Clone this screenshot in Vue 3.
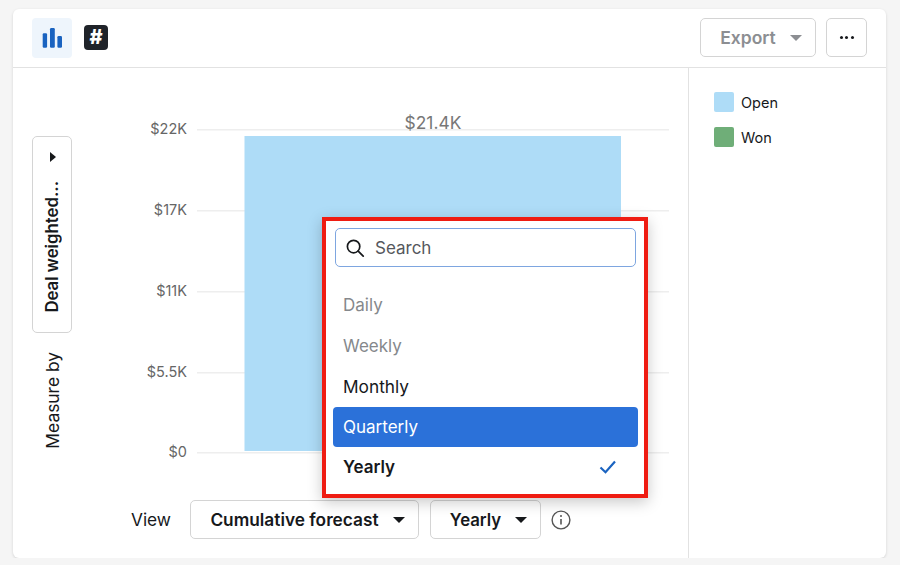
<template>
  <div class="card">
    <!-- top bar -->
    <div class="header">
      <div class="header-left">
        <div class="chart-tab">
          <svg width="20" height="20" viewBox="0 0 20 20">
            <rect x="0.7" y="5.3" width="4.4" height="14.4" rx="1.2" fill="#1a63c0" />
            <rect x="8" y="0" width="4.8" height="19.7" rx="1.2" fill="#1a63c0" />
            <rect x="15.4" y="8" width="4.6" height="11.7" rx="1.2" fill="#1a63c0" />
          </svg>
        </div>
        <div class="hash-tab">#</div>
      </div>
      <div class="header-right">
        <button class="btn export-btn">Export <span class="caret caret-grey" /></button>
        <button class="btn more-btn">
          <span class="dot" /><span class="dot" /><span class="dot" />
        </button>
      </div>
    </div>

    <div class="body">
      <div class="main">
        <div class="chart-row">
          <div class="measure-col">
            <button class="measure-btn">
              <span class="measure-text">Deal weighted...</span>
              <span class="caret-right" />
            </button>
            <span class="measure-label">Measure by</span>
          </div>
          <svg class="chart" width="616" height="432" viewBox="0 0 616 432">
            <g v-for="t in ticks" :key="t.label">
              <line x1="125" :x2="597" :y1="t.y + 0.7" :y2="t.y + 0.7" stroke="#eeeeee" stroke-width="1.5" />
              <text x="115" :y="t.y + 5" text-anchor="end" class="tick">{{ t.label }}</text>
            </g>
            <rect x="172.5" y="68" width="376.5" height="315" fill="#aedcf7" />
            <text x="361" y="61" text-anchor="middle" class="bar-label">$21.4K</text>
          </svg>
        </div>

        <div class="controls">
          <span class="view-label">View</span>
          <button class="btn ctl-btn forecast-btn">Cumulative forecast <span class="caret" /></button>
          <button class="btn ctl-btn yearly-btn">Yearly <span class="caret" /></button>
          <svg class="info" width="20" height="20" viewBox="0 0 20 20" fill="none" stroke="#555" stroke-width="1.4">
            <circle cx="10" cy="10" r="8.9" />
            <path d="M10 9v5.5" stroke-width="1.6" />
            <circle cx="10" cy="6" r="1" fill="#555" stroke="none" />
          </svg>
        </div>

        <!-- period dropdown, highlighted with red frame -->
        <div class="dropdown">
          <div class="search">
            <svg width="20" height="20" viewBox="0 0 20 20" fill="none" stroke="#16181b" stroke-width="1.7">
              <circle cx="8.6" cy="8.6" r="6.2" />
              <path d="M13.2 13.2l5 5" stroke-linecap="round" />
            </svg>
            <span class="search-text">Search</span>
          </div>
          <div class="items">
            <div v-for="o in options" :key="o.label" class="item" :class="o.kind">
              <span>{{ o.label }}</span>
              <svg v-if="o.kind === 'selected'" width="18" height="14" viewBox="0 0 18 14" fill="none" stroke="#1a63c0" stroke-width="2.2">
                <path d="M1.5 7.5l5 4.7L16 1.5" />
              </svg>
            </div>
          </div>
        </div>
      </div>

      <div class="legend">
        <div v-for="l in legend" :key="l.label" class="legend-row">
          <span class="swatch" :style="{ background: l.color }" />
          <span>{{ l.label }}</span>
        </div>
      </div>
    </div>
  </div>
</template>

<script setup>
const ticks = [
  { label: '$22K', y: 61 },
  { label: '$17K', y: 142 },
  { label: '$11K', y: 223 },
  { label: '$5.5K', y: 304 },
  { label: '$0', y: 384 },
]

const options = [
  { label: 'Daily', kind: 'disabled' },
  { label: 'Weekly', kind: 'disabled' },
  { label: 'Monthly', kind: 'plain' },
  { label: 'Quarterly', kind: 'active' },
  { label: 'Yearly', kind: 'selected' },
]

const legend = [
  { label: 'Open', color: '#aedcf7' },
  { label: 'Won', color: '#6fae78' },
]
</script>

<style>
html, body { background: #f5f5f5; }
</style>

<style scoped>
.card {
  box-sizing: border-box;
  width: 873px;
  height: 549px;
  margin: 9px 0 0 13px;
  background: #fff;
  border-radius: 6px;
  box-shadow: 0 1px 3px rgba(0, 0, 0, 0.14);
  display: flex;
  flex-direction: column;
  font-family: Inter, "Liberation Sans", sans-serif;
  color: #16181b;
  overflow: hidden;
}

/* header */
.header {
  flex: none;
  box-sizing: border-box;
  height: 59px;
  border-bottom: 1px solid #e2e2e2;
  display: flex;
  justify-content: space-between;
  padding: 9px 19px 0 19px;
}
.header-left { display: flex; align-items: flex-start; gap: 12px; }
.header-right { display: flex; align-items: flex-start; gap: 10px; }
.chart-tab {
  width: 40px;
  height: 40px;
  background: #eef5fc;
  border-radius: 4px;
  display: flex;
  align-items: center;
  justify-content: center;
}
.hash-tab {
  width: 24px;
  height: 25px;
  margin-top: 7px;
  background: #1f2329;
  border-radius: 4px;
  color: #fff;
  font-size: 20px;
  font-weight: 800;
  line-height: 25px;
  text-align: center;
}
.btn {
  box-sizing: border-box;
  height: 39px;
  background: #fff;
  border: 1px solid #d4d4d4;
  border-radius: 5px;
  font-family: inherit;
  font-size: 17.5px;
  font-weight: 600;
  color: #16181b;
  display: inline-flex;
  align-items: center;
  justify-content: center;
  padding: 0;
}
.export-btn { width: 116px; color: #8c8e92; gap: 14px; padding-left: 6px; }
.more-btn { width: 41px; gap: 2.5px; }
.dot { width: 3px; height: 3px; border-radius: 50%; background: #16181b; }
.caret {
  display: inline-block;
  width: 0;
  height: 0;
  border-left: 6px solid transparent;
  border-right: 6px solid transparent;
  border-top: 6px solid #16181b;
}
.caret-grey { border-top-color: #8c8e92; }

/* body */
.body { flex: 1; display: flex; min-height: 0; }
.main { position: relative; flex: none; width: 675px; }
.chart-row { display: flex; height: 432px; }
.measure-col {
  box-sizing: border-box;
  width: 59px;
  padding: 68px 0 0 19px;
  display: flex;
  flex-direction: column;
  align-items: flex-start;
}
.measure-btn {
  box-sizing: border-box;
  width: 40px;
  height: 197px;
  background: #fff;
  border: 1px solid #d4d4d4;
  border-radius: 5px;
  padding: 15px 0 19px;
  display: flex;
  flex-direction: column-reverse;
  align-items: center;
  justify-content: space-between;
  font-family: inherit;
  color: #16181b;
}
.measure-text {
  writing-mode: vertical-rl;
  transform: rotate(180deg);
  font-size: 16.8px;
  font-weight: 600;
  white-space: nowrap;
}
.caret-right {
  width: 0;
  height: 0;
  margin-left: 1px;
  border-top: 5.5px solid transparent;
  border-bottom: 5.5px solid transparent;
  border-left: 6.5px solid #16181b;
}
.measure-label {
  writing-mode: vertical-rl;
  transform: rotate(180deg);
  margin: 19px 0 0 10px;
  font-size: 17.4px;
  white-space: nowrap;
}
.chart { flex: none; display: block; }
.tick { font-size: 14.5px; fill: #666; font-family: Inter, "Liberation Sans", sans-serif; }
.bar-label { font-size: 17.4px; fill: #777; font-family: Inter, "Liberation Sans", sans-serif; }

/* view controls */
.controls { display: flex; align-items: center; padding-left: 118px; height: 39px; }
.view-label { width: 59px; font-size: 17.3px; }
.ctl-btn { font-size: 17.3px; gap: 14px; padding-left: 6px; }
.forecast-btn { width: 229px; margin-right: 11px; }
.yearly-btn { width: 111px; margin-right: 10px; font-size: 16.8px; }

/* dropdown */
.dropdown {
  position: absolute;
  left: 309px;
  top: 149px;
  box-sizing: border-box;
  width: 326px;
  height: 281px;
  background: #fff;
  border: 4px solid #ef1c12;
  padding: 7px 6px 0 7px;
  box-shadow: 0 4px 14px rgba(0, 0, 0, 0.22);
}
.search {
  box-sizing: border-box;
  height: 39px;
  margin: 0 2px;
  border: 1px solid #7ea6e0;
  border-radius: 5px;
  display: flex;
  align-items: center;
  gap: 10px;
  padding-left: 9px;
}
.search-text { font-size: 17px; color: #55585d; }
.items { margin-top: 18px; }
.item {
  box-sizing: border-box;
  height: 40.5px;
  padding: 0 21px 0 10px;
  display: flex;
  align-items: center;
  justify-content: space-between;
  font-size: 17px;
  border-radius: 4px;
}
.item.disabled { color: #85888c; }
.item.plain { padding-top: 1px; font-size: 17.3px; }
.item.active { background: #2b71d9; color: #fff; height: 40px; }
.item.selected { font-weight: 600; padding-top: 1px; }

/* legend */
.legend {
  flex: 1;
  border-left: 1px solid #e2e2e2;
  padding: 24px 0 0 25px;
  display: flex;
  flex-direction: column;
  gap: 15px;
  font-size: 14.5px;
}
.legend-row { display: flex; align-items: center; gap: 7px; height: 20px; }
.swatch { width: 20px; height: 20px; border-radius: 2px; }
</style>
